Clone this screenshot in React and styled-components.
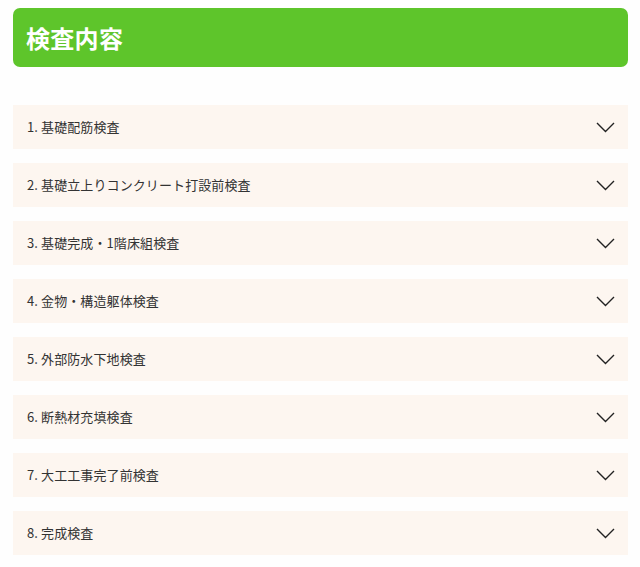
import React from "react"
import styled, { createGlobalStyle } from "styled-components"

const GlobalStyle = createGlobalStyle`
  body {
    margin: 0;
    background: #fefefe;
    font-family: "Noto Sans CJK JP", "Noto Sans", sans-serif;
  }
`

const Page = styled.div`
  padding: 8px 12px 0 13px;
`

const Heading = styled.h2`
  margin: 0;
  height: 59px;
  box-sizing: border-box;
  display: flex;
  align-items: center;
  padding: 0 0 0 13px;
  background: #5ec52b;
  border-radius: 7px;
  color: #fff;
  font-size: 24px;
  font-weight: 700;
  letter-spacing: 0.3px;
`

const List = styled.div`
  display: flex;
  flex-direction: column;
  gap: 14px;
  margin-top: 38px;
`

const Row = styled.div`
  height: 44px;
  display: flex;
  align-items: center;
  justify-content: space-between;
  padding: 0 13px 0 14px;
  background: #fdf6f0;
  color: #333;
  font-size: 13px;
  letter-spacing: 0.1px;
  cursor: pointer;
`

const Label = styled.span`
  margin-top: -2px;
`

const Chevron = () => (
  <svg width="19" height="11" viewBox="0 0 19 11" fill="none">
    <path d="M1 1 L9.5 9.5 L18 1" stroke="#222" strokeWidth="1.4" />
  </svg>
)

const items = [
  "1. 基礎配筋検査",
  "2. 基礎立上りコンクリート打設前検査",
  "3. 基礎完成・1階床組検査",
  "4. 金物・構造躯体検査",
  "5. 外部防水下地検査",
  "6. 断熱材充填検査",
  "7. 大工工事完了前検査",
  "8. 完成検査",
]

export default function App() {
  return (
    <Page>
      <GlobalStyle />
      <Heading>検査内容</Heading>
      <List>
        {items.map((t) => (
          <Row key={t}>
            <Label>{t}</Label>
            <Chevron />
          </Row>
        ))}
      </List>
    </Page>
  )
}
